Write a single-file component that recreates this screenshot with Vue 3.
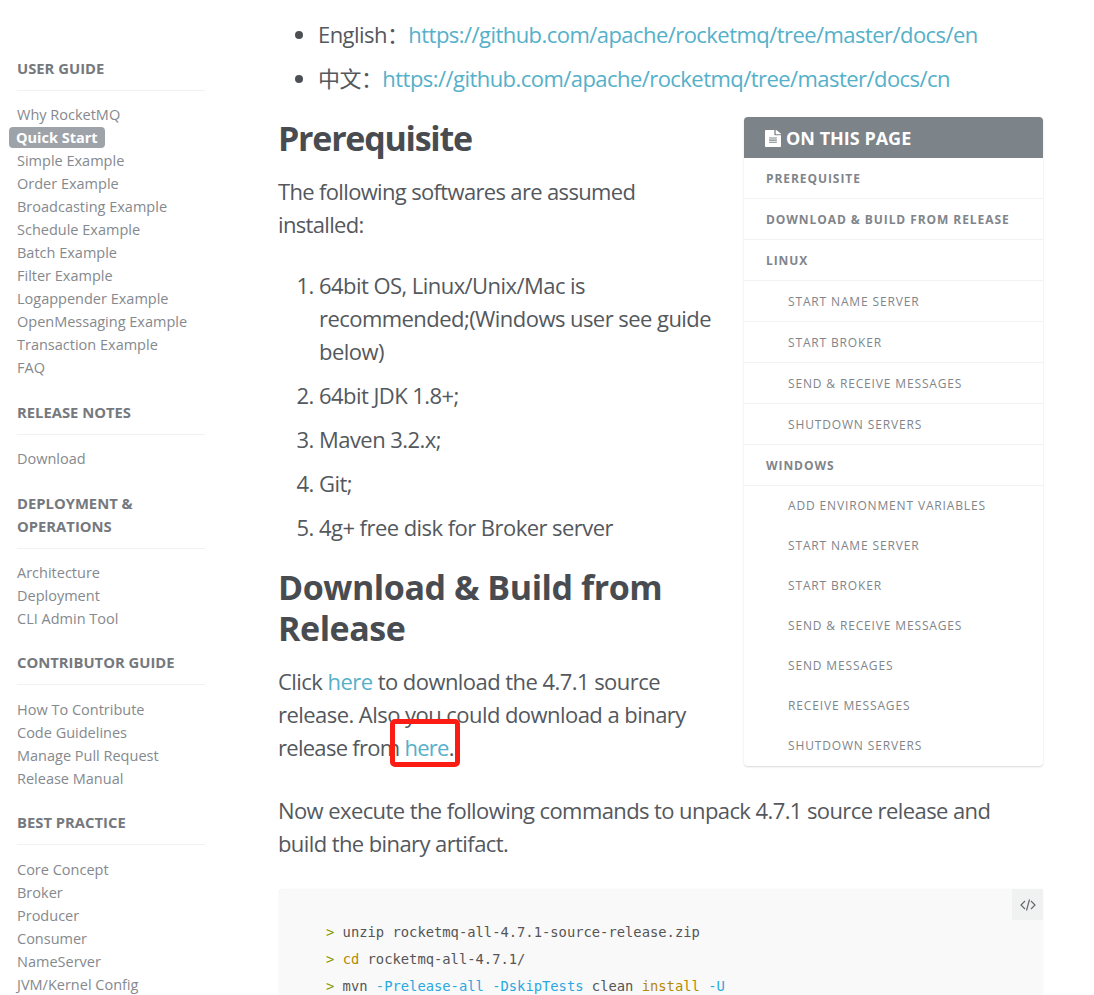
<script setup>
const groups = [
  { title: ['USER GUIDE'], items: ['Why RocketMQ', 'Quick Start', 'Simple Example', 'Order Example', 'Broadcasting Example', 'Schedule Example', 'Batch Example', 'Filter Example', 'Logappender Example', 'OpenMessaging Example', 'Transaction Example', 'FAQ'] },
  { title: ['RELEASE NOTES'], items: ['Download'] },
  { title: ['DEPLOYMENT &', 'OPERATIONS'], items: ['Architecture', 'Deployment', 'CLI Admin Tool'] },
  { title: ['CONTRIBUTOR GUIDE'], items: ['How To Contribute', 'Code Guidelines', 'Manage Pull Request', 'Release Manual'] },
  { title: ['BEST PRACTICE'], items: ['Core Concept', 'Broker', 'Producer', 'Consumer', 'NameServer', 'JVM/Kernel Config'] }
]
const tocTop = [
  { t: 'PREREQUISITE', lvl: 1 },
  { t: 'DOWNLOAD & BUILD FROM RELEASE', lvl: 1 },
  { t: 'LINUX', lvl: 1 },
  { t: 'START NAME SERVER', lvl: 2 },
  { t: 'START BROKER', lvl: 2 },
  { t: 'SEND & RECEIVE MESSAGES', lvl: 2 },
  { t: 'SHUTDOWN SERVERS', lvl: 2 },
  { t: 'WINDOWS', lvl: 1 }
]
const tocWin = ['ADD ENVIRONMENT VARIABLES', 'START NAME SERVER', 'START BROKER', 'SEND & RECEIVE MESSAGES', 'SEND MESSAGES', 'RECEIVE MESSAGES', 'SHUTDOWN SERVERS']
const steps = ['64bit OS, Linux/Unix/Mac is recommended;(Windows user see guide below)', '64bit JDK 1.8+;', 'Maven 3.2.x;', 'Git;', '4g+ free disk for Broker server']
</script>

<template>
  <div class="page">
    <nav class="side">
      <section v-for="g in groups" :key="g.title[0]" class="group">
        <h5 class="group-title"><span v-for="l in g.title" :key="l" class="tline">{{ l }}</span></h5>
        <ul class="side-list">
          <li v-for="i in g.items" :key="i"><span :class="['side-item', { active: i === 'Quick Start' }]">{{ i }}</span></li>
        </ul>
      </section>
    </nav>
    <main class="article">
      <ul class="langs">
        <li>English：<a>https://github.com/apache/rocketmq/tree/master/docs/en</a></li>
        <li>中文：<a>https://github.com/apache/rocketmq/tree/master/docs/cn</a></li>
      </ul>
      <aside class="toc">
        <div class="toc-head">
          <svg class="doc" viewBox="0 0 384 512" width="16" height="17" preserveAspectRatio="none"><path fill="#fff" d="M224 136V0H24C10.700 0 0 10.700 0 24v464c0 13.300 10.700 24 24 24h336c13.300 0 24-10.700 24-24V160H248c-13.200 0-24-10.800-24-24zm64 236c0 6.600-5.400 12-12 12H108c-6.600 0-12-5.400-12-12v-8c0-6.600 5.400-12 12-12h168c6.600 0 12 5.400 12 12v8zm0-64c0 6.600-5.400 12-12 12H108c-6.600 0-12-5.400-12-12v-8c0-6.600 5.400-12 12-12h168c6.600 0 12 5.400 12 12v8zm0-72v8c0 6.600-5.400 12-12 12H108c-6.600 0-12-5.400-12-12v-8c0-6.600 5.400-12 12-12h168c6.600 0 12 5.400 12 12zm96-114.100v6.100H256V0h6.100c6.400 0 12.500 2.500 17 7l97.900 98c4.500 4.500 7 10.600 7 16.900z"/></svg>
          <span>ON THIS PAGE</span>
        </div>
        <div v-for="r in tocTop" :key="r.t" :class="['toc-row', 'l' + r.lvl]">{{ r.t }}</div>
        <div class="toc-win">
          <div v-for="r in tocWin" :key="r" class="toc-row l2 plain">{{ r }}</div>
        </div>
      </aside>
      <h2 class="h-pre">Prerequisite</h2>
      <p class="p1">The following softwares are assumed installed:</p>
      <ol class="steps">
        <li v-for="s in steps" :key="s">{{ s }}</li>
      </ol>
      <h2 class="h-dl">Download &amp; Build from Release</h2>
      <p class="p2">Click <a>here</a> to download the 4.7.1 source release. Also you could download a binary <span class="tight">release from <span class="mark-wrap"><a>here</a>.<i class="mark"></i></span></span></p>
      <p class="p3">Now execute the following commands to unpack 4.7.1 source release and build the binary artifact.</p>
      <div class="code">
        <div class="code-tag">
          <svg viewBox="0 0 16 16" width="16" height="16" fill="none" stroke="#666a6f" stroke-width="1.2"><path d="M5 4 1 8l4 4M11 4l4 4-4 4M9.500 2.500l-3 11"/></svg>
        </div>
        <div class="cl"><b class="pr">&gt;</b> unzip rocketmq-all-4.7.1-source-release.zip</div>
        <div class="cl"><b class="pr">&gt;</b> <span class="kw">cd</span> rocketmq-all-4.7.1/</div>
        <div class="cl"><b class="pr">&gt;</b> mvn <span class="op">-Prelease-all -DskipTests</span> clean <span class="kw">install</span> <span class="op">-U</span></div>
      </div>
    </main>
  </div>
</template>

<style>
html, body { margin: 0; height: 995px; overflow: hidden; background: #fff; }
</style>

<style scoped>
.page {
  display: flex;
  height: 995px;
  overflow: hidden;
  font-family: "Open Sans", "Noto Sans CJK SC", sans-serif;
}
.side { width: 188px; margin-left: 17px; padding-top: 57px; flex: none; }
.group { margin-bottom: 21.400px; }
.group-title {
  margin: 0 0 12.400px;
  padding-bottom: 10px;
  border-bottom: 1px solid #f0f1f2;
  font-size: 14.800px;
  line-height: 23px;
  font-weight: 700;
  color: #75797e;
}
.tline { display: block; }
.side-list { list-style: none; margin: 0; padding: 0; }
.side-list li { height: 23px; line-height: 23px; font-size: 14.500px; color: #85898e; white-space: nowrap; }
.side-item { display: inline-block; }
.side-item.active {
  margin-left: -8px;
  padding: 0 7px;
  height: 21px;
  line-height: 21px;
  background: #9ea3a9;
  color: #fff;
  font-weight: 700;
  border-radius: 4px;
}
.article {
  width: 764px;
  margin-left: 74px;
  flex: none;
  font-size: 22px;
  line-height: 33px;
  color: #54585d;
  letter-spacing: -0.55px;
}
a { color: #55b0c9; }
.langs { margin: 0 0 0 -1px; padding: 18px 0 0 40px; }
.langs li { margin-bottom: 11px; }
.langs li::marker { color: #4c5055; }
.toc {
  float: right;
  width: 299px;
  margin: 11px 0 16px 30px;
  border-radius: 4px;
  box-shadow: 0 1px 2px rgba(0,0,0,.16);
  overflow: hidden;
  letter-spacing: 0;
}
.toc-head {
  height: 40px;
  padding: 1px 0 0 21px;
  background: #7c8389;
  color: #fff;
  display: flex;
  align-items: center;
  gap: 5px;
  font-size: 18px;
  font-weight: 700;
}
.toc-row {
  height: 40px;
  line-height: 41px;
  border-bottom: 1px solid #f1f2f3;
  font-size: 12px;
  color: #80858b;
  letter-spacing: 0.930px;
  white-space: nowrap;
}
.toc-row.l1 { padding-left: 22px; font-weight: 700; }
.toc-row.l2 { padding-left: 44px; letter-spacing: 0.850px; }
.toc-row.plain { border-bottom: 0; line-height: 40px; }
h2 {
  margin: 0 0 0 -1px;
  font-size: 34px;
  line-height: 41px;
  font-weight: 700;
  color: #484c51;
}
.h-pre { padding-top: 12px; letter-spacing: -1.250px; }
.p1 { margin: 16px 0 0 -1px; letter-spacing: -0.660px; }
.steps { margin: 28px 0 0; padding: 0 0 0 40px; }
.steps li { margin-bottom: 11px; }
.h-dl { margin-top: 23px; letter-spacing: -0.450px; }
.p2 { margin: 16px 0 0 -1px; }
.tight { letter-spacing: -0.720px; }
.mark-wrap { position: relative; }
.mark {
  position: absolute;
  left: -14px;
  top: -13px;
  width: 60px;
  height: 38px;
  border: 5px solid #fb1d14;
  border-radius: 5px;
}
.p3 { margin: 30px 0 0 -1px; letter-spacing: -0.590px; }
.code {
  clear: both;
  position: relative;
  margin-top: 29px;
  padding: 30px 0 0 47px;
  background: #f9f9f9;
  border-radius: 4px;
  box-shadow: 0 0 1px rgba(0,0,0,.15);
  font-family: "DejaVu Sans Mono", monospace;
  font-size: 13.800px;
  line-height: 27px;
  letter-spacing: 0;
  color: #555;
  height: 200px;
  white-space: pre;
}
.code-tag {
  position: absolute;
  right: 0;
  top: 0;
  width: 31px;
  height: 31px;
  background: #f0f1f1;
  display: flex;
  align-items: center;
  justify-content: center;
}
.pr { color: #859900; font-weight: 400; }
.kw { color: #b58900; }
.op { color: #2aa8e0; }
</style>
